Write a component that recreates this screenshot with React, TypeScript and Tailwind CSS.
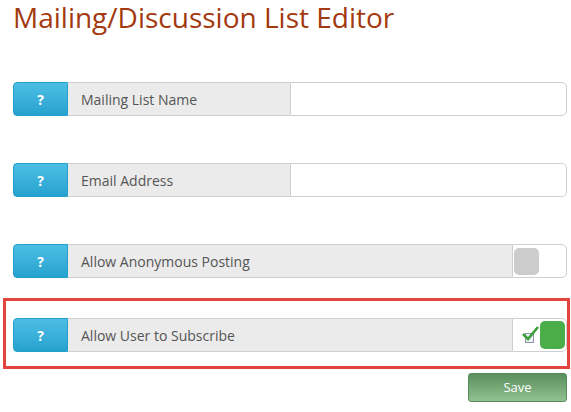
import React from "react";

const font = { fontFamily: '"Open Sans", "Noto Sans", sans-serif' };

function HelpButton() {
  return (
    <div className="flex h-full w-[55px] shrink-0 items-center justify-center rounded-l-[4px] border border-[#22a0cc] bg-gradient-to-b from-[#4cbee5] to-[#26a2cf] text-[14px] font-bold text-white">
      ?
    </div>
  );
}

function Label({ text, wide }: { text: string; wide?: boolean }) {
  return (
    <div
      className={`flex h-full items-center border-y border-[#cfcfcf] bg-[#ebebeb] pl-[13px] text-[14px] text-[#555] ${
        wide ? "w-[444px]" : "w-[222px]"
      }`}
    >
      {text}
    </div>
  );
}

function TextRow({ label }: { label: string }) {
  return (
    <div className="flex h-[34px] w-[554px]">
      <HelpButton />
      <Label text={label} />
      <div className="h-full flex-1 rounded-r-[5px] border border-[#cfcfcf] bg-white" />
    </div>
  );
}

function ToggleRow({ label, on }: { label: string; on?: boolean }) {
  return (
    <div className="flex h-[34px] w-[554px]">
      <HelpButton />
      <Label text={label} wide />
      <div className="relative flex h-full flex-1 items-center justify-end rounded-r-[5px] border border-[#cfcfcf] bg-white pr-[1px]">
        {on ? (
          <>
            <svg className="absolute left-[9px] top-[3px]" width="18" height="22" viewBox="0 0 18 22">
              <rect x="3.5" y="11.5" width="8" height="9" fill="#eef0f6" stroke="#8a94b0" strokeWidth="1" />
              <path d="M1 12 L6 17 L16 5" fill="none" stroke="#3aa03a" strokeWidth="2.6" strokeLinejoin="miter" />
            </svg>
            <div className="h-[28px] w-[25px] rounded-[5px] bg-[#4aad47]" />
          </>
        ) : (
          <div className="mr-[26px] h-[27px] w-[25px] rounded-[5px] bg-[#cccccc]" />
        )}
      </div>
    </div>
  );
}

export default function App() {
  return (
    <div className="h-[412px] w-[571px] bg-white" style={font}>
      <div className="pl-[13px] pt-[1px]">
        <h1 className="text-[28px] leading-[32px] font-normal text-[#a3390f]">
          Mailing/Discussion List Editor
        </h1>
        <div className="mt-[49px]">
          <TextRow label="Mailing List Name" />
        </div>
        <div className="mt-[47px]">
          <TextRow label="Email Address" />
        </div>
        <div className="mt-[47px]">
          <ToggleRow label="Allow Anonymous Posting" />
        </div>
      </div>
      <div className="ml-[3px] mt-[20px] w-[567px] border-[3px] border-[#e2443e] pb-[14px] pl-[7px] pt-[17px]">
        <ToggleRow label="Allow User to Subscribe" on />
      </div>
      <div className="flex justify-end pr-[4px] pt-[4px]">
        <button className="h-[29px] w-[99px] rounded-[3px] border border-[#5a8a5c] bg-gradient-to-b from-[#5b8f5d] to-[#8fc290] text-[13px] text-white">
          Save
        </button>
      </div>
    </div>
  );
}
